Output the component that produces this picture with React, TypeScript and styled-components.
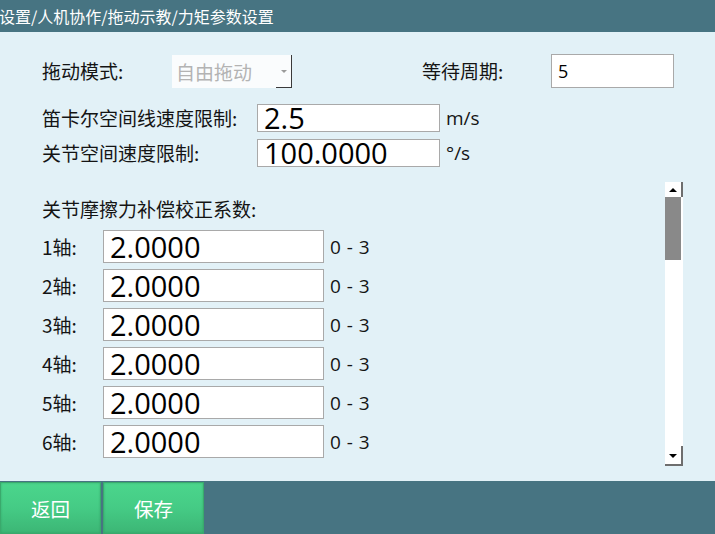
import * as React from 'react';
import styled, { createGlobalStyle } from 'styled-components';

const palette = {
  bar: '#477482',
  background: '#e2f1f7',
  border: '#a9a9a9',
  text: '#141414',
  muted: '#b3b3b3',
};

const cjkFont = `"Noto Sans CJK SC", "Noto Sans", sans-serif`;
const numFont = `"Open Sans", "Noto Sans", "Noto Sans CJK SC", sans-serif`;

const GlobalStyle = createGlobalStyle`
  html, body {
    margin: 0;
    padding: 0;
    background: ${palette.background};
  }
  * {
    box-sizing: border-box;
  }
`;

const Screen = styled.div`
  width: 715px;
  height: 534px;
  display: flex;
  flex-direction: column;
  overflow: hidden;
  background: ${palette.background};
  font-family: ${cjkFont};
  color: ${palette.text};
`;

const TitleBar = styled.div`
  height: 32px;
  flex-shrink: 0;
  display: flex;
  align-items: center;
  padding-left: 0;
  text-indent: -1px;
  background: ${palette.bar};
  color: #ffffff;
  font-size: 16px;
  white-space: nowrap;
`;

const Content = styled.div`
  flex: 1;
  display: flex;
  flex-direction: column;
  padding: 22px 0 0 42px;
`;

const FormRow = styled.div<{ $height: number; $top?: number }>`
  display: flex;
  align-items: center;
  height: ${(p) => p.$height}px;
  margin-top: ${(p) => p.$top ?? 0}px;
`;

const Label = styled.div<{ $width: number }>`
  width: ${(p) => p.$width}px;
  flex-shrink: 0;
  font-size: 19px;
  line-height: 24px;
  white-space: nowrap;
`;

const Combo = styled.div`
  position: relative;
  width: 120px;
  height: 33px;
  display: flex;
  align-items: center;
  padding-left: 4px;
  background: #fafcfd;
  color: ${palette.muted};
  font-size: 19px;
`;

const DropButton = styled.div`
  position: absolute;
  right: 0;
  top: 0;
  bottom: 0;
  width: 16px;
  display: flex;
  align-items: center;
  justify-content: center;
  border-right: 1px solid #3a3a3a;
  &::after {
    content: '';
    position: absolute;
    left: 0;
    right: 0;
    bottom: 0;
    height: 1px;
    background: #3a3a3a;
  }
`;

const DropArrow = styled.div`
  width: 0;
  height: 0;
  border-left: 3px solid transparent;
  border-right: 3px solid transparent;
  border-top: 3px solid #9a9a9a;
`;

const Field = styled.input<{ $width: number; $height: number; $size: number }>`
  width: ${(p) => p.$width}px;
  height: ${(p) => p.$height}px;
  flex-shrink: 0;
  margin: 0;
  padding: 0 0 1px 6px;
  border: 1px solid ${palette.border};
  border-radius: 0;
  background: #ffffff;
  color: #000000;
  font-family: ${numFont};
  font-size: ${(p) => p.$size}px;
  line-height: ${(p) => p.$height - 3}px;
  outline: none;
`;

const Unit = styled.div`
  margin-left: 6px;
  font-family: ${numFont};
  font-size: 19px;
  white-space: nowrap;
`;

const Spacer = styled.div<{ $width: number }>`
  width: ${(p) => p.$width}px;
  flex-shrink: 0;
`;

const ScrollArea = styled.div`
  display: flex;
  height: 284px;
  margin-top: 15px;
  padding-right: 32px;
`;

const ScrollBody = styled.div`
  flex: 1;
  display: flex;
  flex-direction: column;
  gap: 6px;
  padding-top: 15px;
`;

const SectionTitle = styled.div`
  font-size: 19px;
  line-height: 24px;
  margin-bottom: 3px;
`;

const Range = styled.div`
  margin-left: 6px;
  font-family: ${numFont};
  font-size: 19px;
  word-spacing: 1px;
  white-space: pre;
`;

const Scrollbar = styled.div`
  width: 18px;
  display: flex;
  flex-direction: column;
  background: #ffffff;
`;

const ScrollButton = styled.div<{ $down?: boolean }>`
  position: relative;
  height: ${(p) => (p.$down ? 20 : 15)}px;
  display: flex;
  align-items: ${(p) => (p.$down ? 'flex-start' : 'center')};
  padding-top: ${(p) => (p.$down ? 8 : 0)}px;
  justify-content: center;
  border-right: 2px solid #6e6e6e;
  border-bottom: ${(p) => (p.$down ? '2px solid #6e6e6e' : 'none')};
`;

const Triangle = styled.div<{ $down?: boolean }>`
  width: 0;
  height: 0;
  border-left: 4px solid transparent;
  border-right: 4px solid transparent;
  ${(p) =>
    p.$down ? 'border-top: 4px solid #000;' : 'border-bottom: 4px solid #000;'}
`;

const Thumb = styled.div`
  height: 63px;
  width: 16px;
  background: #898989;
`;

const Track = styled.div`
  flex: 1;
`;

const BottomBar = styled.div`
  height: 53px;
  flex-shrink: 0;
  display: flex;
  gap: 2px;
  padding-top: 1px;
  background: ${palette.bar};
`;

const ActionButton = styled.div`
  width: 101px;
  height: 52px;
  display: flex;
  align-items: center;
  justify-content: center;
  border: 1px solid #3aa96c;
  background: linear-gradient(to bottom, #4bd68c 0%, #45cb85 50%, #3cb675 100%);
  box-shadow: inset 0 0 2px rgba(40, 140, 90, 0.6);
  color: #ffffff;
  font-size: 19.5px;
  cursor: pointer;
`;

const axes = ['1轴:', '2轴:', '3轴:', '4轴:', '5轴:', '6轴:'];

const App: React.FC = () => {
  return (
    <Screen>
      <GlobalStyle />
      <TitleBar>设置/人机协作/拖动示教/力矩参数设置</TitleBar>
      <Content>
        <FormRow $height={34}>
          <Label $width={130}>拖动模式:</Label>
          <Combo>
            自由拖动
            <DropButton>
              <DropArrow />
            </DropButton>
          </Combo>
          <Spacer $width={130} />
          <Label $width={129}>等待周期:</Label>
          <Field $width={123} $height={34} $size={18} readOnly value="5" />
        </FormRow>
        <FormRow $height={28} $top={16}>
          <Label $width={215}>笛卡尔空间线速度限制:</Label>
          <Field $width={183} $height={28} $size={29} readOnly value="2.5" />
          <Unit>m/s</Unit>
        </FormRow>
        <FormRow $height={28} $top={7}>
          <Label $width={215}>关节空间速度限制:</Label>
          <Field $width={183} $height={28} $size={29} readOnly value="100.0000" />
          <Unit>°/s</Unit>
        </FormRow>
        <ScrollArea>
          <ScrollBody>
            <SectionTitle>关节摩擦力补偿校正系数:</SectionTitle>
            {axes.map((axis) => (
              <FormRow key={axis} $height={33}>
                <Label $width={61}>{axis}</Label>
                <Field $width={221} $height={33} $size={29} readOnly value="2.0000" />
                <Range>0 - 3</Range>
              </FormRow>
            ))}
          </ScrollBody>
          <Scrollbar>
            <ScrollButton>
              <Triangle />
            </ScrollButton>
            <Thumb />
            <Track />
            <ScrollButton $down>
              <Triangle $down />
            </ScrollButton>
          </Scrollbar>
        </ScrollArea>
      </Content>
      <BottomBar>
        <ActionButton>返回</ActionButton>
        <ActionButton>保存</ActionButton>
      </BottomBar>
    </Screen>
  );
};

export default App;
